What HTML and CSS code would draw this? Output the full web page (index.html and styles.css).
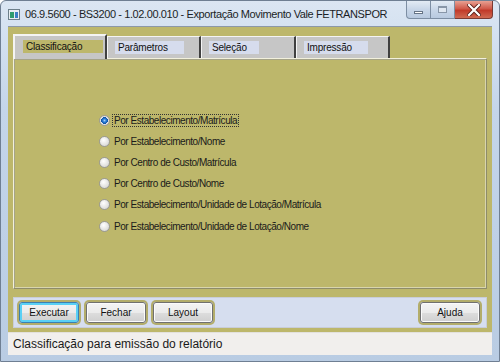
FILE: index.html
```
<!DOCTYPE html>
<html lang="pt-BR">
<head>
    <meta charset="UTF-8">
    <title>Exportação Movimento Vale FETRANSPOR</title>
    <link rel="stylesheet" href="styles.css">
</head>
<body>
    <div class="window">
        <div class="titlebar">
            <span class="app-icon"><i></i><i></i></span>
            <span class="title">06.9.5600 - BS3200 - 1.02.00.010 - Exportação Movimento Vale FETRANSPOR</span>
            <div class="caption-buttons">
                <span class="cap cap-min"><b></b></span>
                <span class="cap cap-max"><b></b></span>
                <span class="cap cap-close">
                    <svg width="14" height="12" viewBox="0 0 14 12">
                        <path d="M2 1 L12 11 M12 1 L2 11" stroke="#5a1f1a" stroke-width="4" stroke-linecap="square"/>
                        <path d="M2 1 L12 11 M12 1 L2 11" stroke="#fff" stroke-width="2.2" stroke-linecap="square"/>
                    </svg>
                </span>
            </div>
        </div>

        <div class="client">
            <div class="tabs">
                <div class="tab active" style="width: 94px"><span class="tab-label" style="width: 80px">Classificação</span></div>
                <div class="tab" style="width: 94px"><span class="tab-label" style="width: 69px">Parâmetros</span></div>
                <div class="tab" style="width: 95px"><span class="tab-label" style="width: 50px">Seleção</span></div>
                <div class="tab" style="width: 94px"><span class="tab-label" style="width: 64px">Impressão</span></div>
            </div>

            <div class="panel">
                <ul class="options">
                    <li class="checked"><span class="radio"></span><span class="focus">Por Estabelecimento/Matrícula</span></li>
                    <li><span class="radio"></span><span>Por Estabelecimento/Nome</span></li>
                    <li><span class="radio"></span><span>Por Centro de Custo/Matrícula</span></li>
                    <li><span class="radio"></span><span>Por Centro de Custo/Nome</span></li>
                    <li><span class="radio"></span><span>Por Estabelecimento/Unidade de Lotação/Matrícula</span></li>
                    <li><span class="radio"></span><span>Por Estabelecimento/Unidade de Lotação/Nome</span></li>
                </ul>
            </div>

            <div class="buttonbar">
                <button class="btn default">Executar</button>
                <button class="btn">Fechar</button>
                <button class="btn">Layout</button>
                <button class="btn right">Ajuda</button>
            </div>
        </div>

        <div class="statusbar">Classificação para emissão do relatório</div>
    </div>
</body>
</html>
```

FILE: styles.css
```
* {
    margin: 0;
    padding: 0;
    box-sizing: border-box;
}
body {
    width: 500px;
    height: 362px;
    overflow: hidden;
    font-family: 'Liberation Sans', Arial, sans-serif;
}
.window {
    width: 500px;
    height: 362px;
    display: flex;
    flex-direction: column;
    padding: 0 7px 6px;
    background: linear-gradient(180deg, #dbe6f3 0%, #c4d5ea 30%, #b9cce3 100%);
    border: 1px solid #6f7f93;
    border-radius: 6px 6px 0 0;
}
.titlebar {
    height: 27px;
    display: flex;
    align-items: center;
    margin: 0 -7px;
    padding-left: 7px;
}
.app-icon {
    width: 12px;
    height: 11px;
    margin-top: 2px;
    margin-right: 5px;
    background: #e8eef2;
    border: 1px solid #6d7f8a;
    display: flex;
    align-items: flex-end;
    padding: 0 1px 1px;
    gap: 1px;
    flex-shrink: 0;
}
.app-icon i {
    display: block;
    width: 4px;
    height: 6px;
    background: #2f9c6c;
}
.app-icon i + i {
    background: #3d7fc4;
}
.title {
    font-size: 11px;
    letter-spacing: -0.4px;
    color: #1b1f26;
    margin-top: 2px;
    white-space: nowrap;
}
.caption-buttons {
    margin-left: auto;
    margin-right: 6px;
    align-self: flex-start;
    display: flex;
    flex-shrink: 0;
}
.cap {
    height: 18px;
    display: flex;
    align-items: center;
    justify-content: center;
    border: 1px solid #7d8ea3;
    border-top: none;
    background: linear-gradient(180deg, #e3ebf5, #c8d6e8 50%, #b8c9df);
}
.cap-min {
    width: 25px;
    border-radius: 0 0 0 4px;
}
.cap-min b {
    width: 9px;
    height: 3px;
    margin-top: 5px;
    border: 1px solid #667486;
    background: #fff;
}
.cap-max {
    width: 24px;
    border-left: none;
}
.cap-max b {
    width: 9px;
    height: 7px;
    border: 1px solid #8896a8;
    border-top-width: 2px;
    background: #dfe7f1;
}
.cap-close {
    width: 38px;
    border-left: none;
    border-color: #7b3a33;
    border-radius: 0 0 4px 0;
    background: linear-gradient(180deg, #e8a193, #d0594a 45%, #c13a2a 55%, #cf6a52);
}
.client {
    flex: 1;
    display: flex;
    flex-direction: column;
    background: #bdb76b;
    padding: 7px 5px 4px;
    border-top: 1px solid #8c98a8;
    margin-top: 1px;
}
.tabs {
    display: flex;
    align-items: flex-end;
    height: 24px;
    position: relative;
    z-index: 1;
}
.tab {
    height: 22px;
    background: #c6c6c6;
    border: 1px solid #f4f4f4;
    border-right: 2px solid #404040;
    border-bottom: none;
    display: flex;
    align-items: center;
    padding-left: 7px;
}
.tab.active {
    height: 25px;
    margin-bottom: -1px;
    padding-left: 8px;
    padding-bottom: 3px;
    border-left-width: 2px;
    border-top-width: 2px;
}
.tab-label {
    display: block;
    height: 13px;
    background: #d6dced;
    font-size: 10px;
    letter-spacing: -0.2px;
    line-height: 13px;
    padding-left: 3px;
    color: #111;
}
.tab.active .tab-label {
    background: #bdb76b;
}
.panel {
    height: 231px;
    border: 1px solid #f2f0dc;
    border-right-color: #8e8c6a;
    border-bottom-color: #8e8c6a;
    box-shadow: inset 1px 1px 0 #a6a488, inset -1px -1px 0 #d8d5ad;
    padding: 51px 0 0 85px;
}
.options {
    list-style: none;
}
.options li {
    height: 21.1px;
    display: flex;
    align-items: center;
    font-size: 10px;
    letter-spacing: -0.45px;
    color: #1a1a1a;
}
.radio {
    width: 11px;
    height: 11px;
    border-radius: 50%;
    border: 1px solid #9a9a96;
    background: radial-gradient(circle at 40% 35%, #ffffff, #e2e2e0 60%, #cfcfcc);
    margin-right: 4px;
    flex-shrink: 0;
}
.checked .radio {
    background: radial-gradient(circle, #9fd4ff 0, #2f7fd6 1.6px, #0f56a8 3.2px, #e6e6e4 3.6px, #cfcfcc 100%);
}
.focus {
    outline: 1px dotted #333;
    outline-offset: 0;
    padding: 0 1px;
    margin-left: -1px;
}
.buttonbar {
    margin-top: 8px;
    height: 31px;
    background: #d6deef;
    border: 1px solid #c9cdd8;
    display: flex;
    align-items: center;
    gap: 7px;
    padding: 0 6px 0 5px;
}
.btn {
    width: 60px;
    height: 21px;
    font-family: 'Liberation Sans', Arial, sans-serif;
    font-size: 10px;
    color: #111;
    border: 1px solid #707070;
    border-radius: 3px;
    background: linear-gradient(180deg, #f4f4f4 0%, #ebebeb 50%, #dddddd 51%, #cfcfcf 100%);
    box-shadow: 0 0 0 2px #b3ad6b, inset 0 0 0 1px #fbfbfb;
}
.btn.default {
    border-color: #3c7fb1;
    box-shadow: 0 0 0 2px #b3ad6b, inset 0 0 0 2px #59d0f5;
}
.btn.right {
    margin-left: auto;
}
.statusbar {
    height: 23px;
    background: #f1efed;
    border-top: 1px solid #e3e1dd;
    font-size: 12px;
    line-height: 22px;
    padding-left: 5px;
    color: #1a1a1a;
}
```
